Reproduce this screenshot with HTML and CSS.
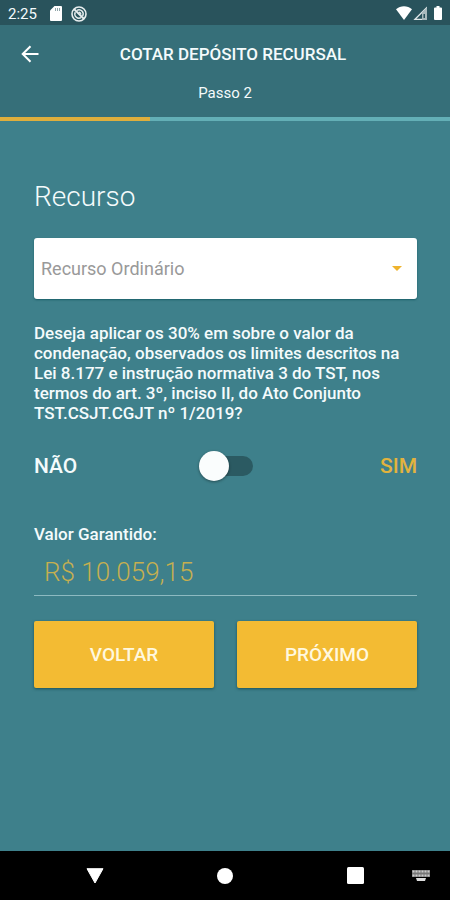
FILE: index.html
```html
<!DOCTYPE html>
<html lang="pt-BR">
<head>
<meta charset="utf-8">
<meta name="viewport" content="width=device-width, initial-scale=1">
<title>Cotar Depósito Recursal</title>
<link rel="stylesheet" href="styles.css">
</head>
<body>
<div class="status">
  <span class="clock">2:25</span>
  <svg class="sd" width="12" height="15" viewBox="0 0 12 15" aria-hidden="true">
    <path fill="#fff" d="M4.500 0H11a1 1 0 0 1 1 1v13a1 1 0 0 1-1 1H1a1 1 0 0 1-1-1V4.500z"/>
    <path stroke="#8fa5a9" d="M5.500 2v3M7.500 2v3M9.500 2v3"/>
  </svg>
  <svg width="16" height="16" viewBox="0 0 16 16" fill="none" stroke="#e8eeef" aria-hidden="true">
    <circle cx="8" cy="8" r="7" stroke-width="1.600"/>
    <path stroke-width="1.800" d="M3 3l10 10"/>
    <path stroke-width="1.400" d="M6 4.300a4.200 4.200 0 0 1 5.600 5.800M10 11.700a4.200 4.200 0 0 1-5.700-5.600M7.800 6.200a2 2 0 0 1 2 2.200"/>
  </svg>
  <svg class="signal" width="47" height="15" viewBox="0 0 47 15" aria-hidden="true">
    <path fill="#fff" d="M0 3.200C4.500-.7 11.500-.7 16 3.200L8 14z"/>
    <path fill="none" stroke="#dfe7e8" stroke-width="1.300" d="M19 13.300L30.300 2v11.300z"/>
    <path fill="#a9babd" d="M26 6.500L31 1.500V14h-5z"/>
    <path fill="#29535c" d="M27.500 8h1.500v4h-1.500z"/>
    <path fill="#fff" d="M40.500 0h3v1.500H45a1 1 0 0 1 1 1V13a1 1 0 0 1-1 1h-6a1 1 0 0 1-1-1V2.500a1 1 0 0 1 1-1h1.500z"/>
  </svg>
</div>
<header class="header">
  <div class="bar">
    <button class="back" type="button" aria-label="Voltar à tela anterior">
      <svg width="18" height="18" viewBox="0 0 18 18" fill="none" stroke="#fff" stroke-width="2" aria-hidden="true"><path d="M17.500 9H2M9.500 1.200L1.700 9l7.800 7.800"/></svg>
    </button>
    <h1 class="title">COTAR DEPÓSITO RECURSAL</h1>
  </div>
  <p class="step">Passo 2</p>
</header>
<progress class="progress" value="1" max="3" aria-label="Progresso"></progress>
<main class="main">
  <form class="form">
    <label class="heading" for="recurso">Recurso</label>
    <div class="picker">
      <select class="select" id="recurso"><option>Recurso Ordinário</option></select>
      <svg class="caret" width="10" height="5" viewBox="0 0 10 5" aria-hidden="true"><path fill="#efb32d" d="M0 0h10L5 5z"/></svg>
    </div>
    <label class="question" for="aplicar">Deseja aplicar os 30% em sobre o valor da condenação, observados os limites descritos na Lei 8.177 e instrução normativa 3 do TST, nos termos do art. 3º, inciso II, do Ato Conjunto TST.CSJT.CGJT nº 1/2019?</label>
    <div class="choice">
      <span>NÃO</span>
      <input class="switch" id="aplicar" type="checkbox" role="switch">
      <span class="yes">SIM</span>
    </div>
    <label class="label" for="valor">Valor Garantido:</label>
    <input class="amount" id="valor" type="text" value="R$ 10.059,15">
    <div class="actions">
      <button class="button" type="button">VOLTAR</button>
      <button class="button" type="button">PRÓXIMO</button>
    </div>
  </form>
</main>
<nav class="nav" aria-label="Sistema">
  <button class="key" type="button" aria-label="Voltar"><svg width="18" height="16" viewBox="0 0 18 16"><path fill="#fff" stroke="#fff" stroke-linejoin="round" d="M1 .7h16L9 15z"/></svg></button>
  <button class="key" type="button" aria-label="Início"><svg width="16" height="16" viewBox="0 0 16 16"><circle cx="8" cy="8" r="8" fill="#fff"/></svg></button>
  <button class="key" type="button" aria-label="Recentes"><svg width="17" height="17" viewBox="0 0 17 17"><rect width="17" height="17" rx="1.500" fill="#fff"/></svg></button>
  <button class="keyboard" type="button" aria-label="Teclado"><svg width="18" height="11" viewBox="0 0 18 11"><path fill="#777" d="M0 0h18v7H0z"/><path stroke="#ccc" stroke-width="2" stroke-dasharray="2 1" d="M.5 1.500h17M.5 5.500h17"/><path fill="#ddd" d="M4 8h10l-1 3H5z"/></svg></button>
</nav>
</body>
</html>
```
FILE: styles.css
```css
* {
  box-sizing: border-box;
}

body {
  display: flex;
  flex-direction: column;
  min-height: 100vh;
  margin: 0;
  background: #3e808b;
  color: #f4fbfc;
  font-family: Roboto, "Liberation Sans", sans-serif;
}

button,
input,
select {
  margin: 0;
  border: 0;
  font-family: inherit;
}

svg {
  display: block;
  flex: none;
}

.status {
  display: flex;
  align-items: center;
  height: 25px;
  padding: 2px 7px 0 8px;
  background: #29535c;
}

.clock {
  font-size: 15px;
  line-height: 20px;
}

.sd {
  margin: 0 9px 0 13px;
}

.signal {
  margin-left: auto;
}

.header {
  padding-bottom: 14px;
  background: #366f79;
}

.bar {
  display: grid;
  grid-template-columns: 34px 1fr;
  align-items: center;
  height: 58px;
  padding: 0 13px;
}

.back {
  padding: 8px;
  background: none;
}

.title {
  margin: 0;
  padding-right: 18px;
  font-size: 17px;
  font-weight: 500;
  line-height: 24px;
  text-align: center;
}

.step {
  margin: 0;
  font-size: 15px;
  line-height: 20px;
  text-align: center;
}

.progress {
  display: block;
  width: 100%;
  height: 4px;
  border: 0;
  background: #63afb6;
  appearance: none;
}

.progress::-webkit-progress-bar {
  background: #63afb6;
}

.progress::-webkit-progress-value {
  background: #dfae3c;
}

.main {
  flex: 1;
  padding: 56px 33px 40px;
}

.form {
  display: flex;
  flex-direction: column;
  padding-left: 1px;
}

.heading {
  font-size: 28px;
  font-weight: 300;
  line-height: 40px;
}

.picker {
  display: grid;
  align-items: center;
  margin: 21px 0 24px;
}

.select,
.caret {
  grid-area: 1 / 1;
}

.select {
  width: 100%;
  height: 61px;
  padding: 0 32px 0 7px;
  border-radius: 3px;
  background: #fff;
  box-shadow: 0 1px 2px rgba(0, 70, 80, 0.6);
  color: #999;
  font-size: 18px;
  appearance: none;
}

.caret {
  justify-self: end;
  margin-right: 15px;
  pointer-events: none;
}

.question {
  font-size: 17px;
  font-weight: 500;
  line-height: 20px;
}

.choice {
  display: grid;
  grid-template-columns: 1fr auto 1fr;
  align-items: center;
  margin: 27px 0 40px;
  font-size: 21px;
  font-weight: 500;
  line-height: 32px;
}

.yes {
  color: #e2b33e;
  text-align: right;
}

.switch {
  display: grid;
  align-items: center;
  width: 54px;
  height: 30px;
  background: none;
  appearance: none;
}

.switch::before,
.switch::after {
  grid-area: 1 / 1;
  content: "";
}

.switch::before {
  height: 20px;
  margin-left: 10px;
  border-radius: 10px;
  background: #2b5a62;
}

.switch::after {
  width: 30px;
  height: 30px;
  border-radius: 50%;
  background: #fafdfd;
  box-shadow: 0 1px 3px rgba(0, 0, 0, 0.4);
}

.switch:checked::after {
  justify-self: end;
}

.label {
  font-size: 17px;
  font-weight: 500;
  line-height: 24px;
}

.amount {
  width: 100%;
  height: 50px;
  padding: 2px 10px 0;
  border-bottom: 1px solid #8dbac1;
  border-radius: 0;
  background: none;
  color: #c5af50;
  font-size: 26px;
  font-weight: 300;
}

.actions {
  display: grid;
  grid-template-columns: 1fr 1fr;
  gap: 23px;
  margin-top: 25px;
}

.button {
  height: 67px;
  border-radius: 2px;
  background: #f3bb33;
  box-shadow: 0 1px 3px rgba(0, 50, 60, 0.6);
  color: #fff8df;
  font-size: 19px;
  font-weight: 500;
}

.nav {
  display: grid;
  grid-template-columns: 20px repeat(3, 1fr) 20px;
  align-items: center;
  height: 49px;
  padding: 0 10px;
  background: #000;
}

.key,
.keyboard {
  display: flex;
  justify-content: center;
  padding: 0;
  background: none;
}

.key:first-child {
  grid-column: 2;
}

.keyboard {
  justify-self: start;
  margin-left: -8px;
}
```
